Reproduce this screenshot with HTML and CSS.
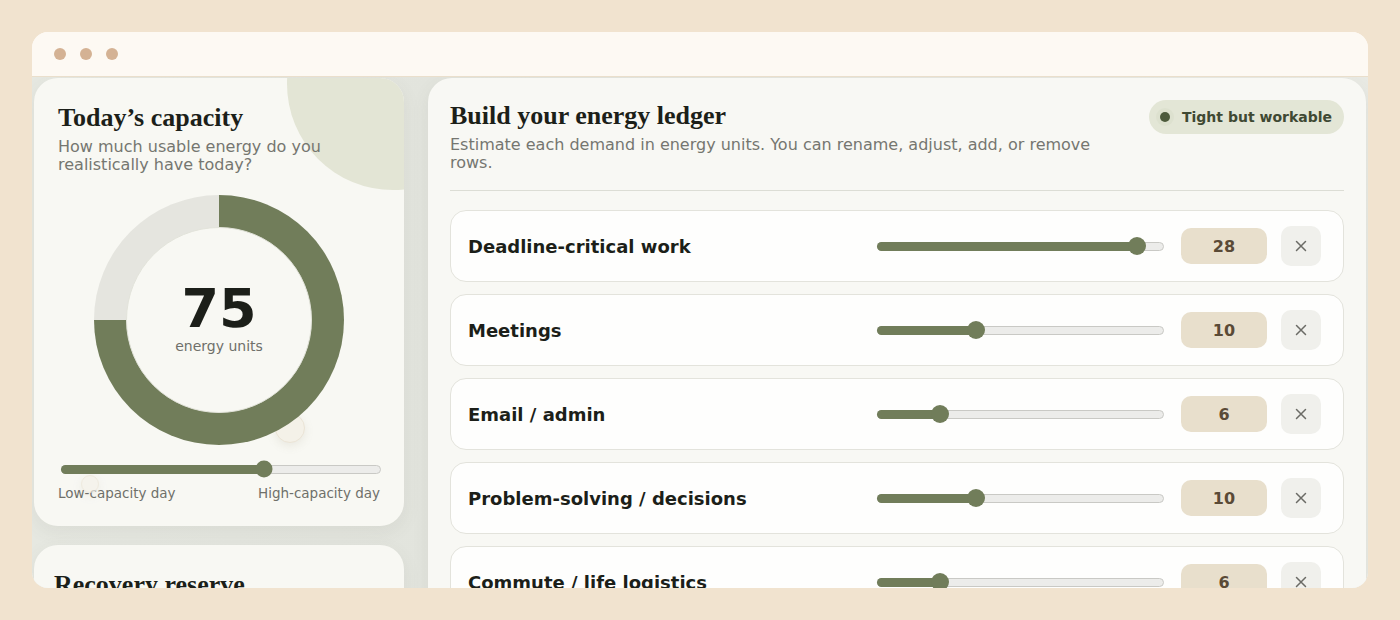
FILE: index.html
```html
<!DOCTYPE html>
<html lang="en">
<head>
<meta charset="utf-8">
<title>Energy ledger</title>
<link rel="stylesheet" href="styles.css">
</head>
<body>
<div class="window">
  <div class="titlebar">
    <span class="dot"></span><span class="dot"></span><span class="dot"></span>
  </div>
  <div class="content">
    <div class="left-col">
      <section class="card capacity">
        <div class="blob"></div>
        <span class="bubble bubble-a"></span>
        <span class="bubble bubble-b"></span>
        <h2 class="card-title">Today’s capacity</h2>
        <p class="card-sub">How much usable energy do you realistically have today?</p>
        <div class="donut" style="--pct: 75%">
          <div class="donut-inner">
            <div class="donut-num">75</div>
            <div class="donut-label">energy units</div>
          </div>
        </div>
        <div class="slider slider-cap">
          <div class="track" style="--v: 0.642"><div class="fill"></div><span class="thumb"></span></div>
        </div>
        <div class="scale-labels"><span>Low-capacity day</span><span>High-capacity day</span></div>
      </section>
      <section class="card reserve">
        <h2 class="card-title">Recovery reserve</h2>
      </section>
    </div>
    <section class="panel">
      <div class="panel-head">
        <div class="head-text">
          <h2 class="card-title">Build your energy ledger</h2>
          <p class="card-sub">Estimate each demand in energy units. You can rename, adjust, add, or remove rows.</p>
        </div>
        <div class="badge"><span class="badge-dot"></span>Tight but workable</div>
      </div>
      <div class="rows">
        <div class="row">
          <span class="row-label">Deadline-critical work</span>
          <div class="slider"><div class="track" style="--v: 0.9333"><div class="fill"></div><span class="thumb"></span></div></div>
          <span class="value">28</span>
          <button class="remove" aria-label="Remove"><svg viewBox="0 0 12 12" width="12" height="12"><path d="M1.5 1.5 L10.5 10.5 M10.5 1.5 L1.5 10.5" stroke="#6b6b66" stroke-width="1.5" stroke-linecap="round"/></svg></button>
        </div>
        <div class="row">
          <span class="row-label">Meetings</span>
          <div class="slider"><div class="track" style="--v: 0.3333"><div class="fill"></div><span class="thumb"></span></div></div>
          <span class="value">10</span>
          <button class="remove" aria-label="Remove"><svg viewBox="0 0 12 12" width="12" height="12"><path d="M1.5 1.5 L10.5 10.5 M10.5 1.5 L1.5 10.5" stroke="#6b6b66" stroke-width="1.5" stroke-linecap="round"/></svg></button>
        </div>
        <div class="row">
          <span class="row-label">Email / admin</span>
          <div class="slider"><div class="track" style="--v: 0.2"><div class="fill"></div><span class="thumb"></span></div></div>
          <span class="value">6</span>
          <button class="remove" aria-label="Remove"><svg viewBox="0 0 12 12" width="12" height="12"><path d="M1.5 1.5 L10.5 10.5 M10.5 1.5 L1.5 10.5" stroke="#6b6b66" stroke-width="1.5" stroke-linecap="round"/></svg></button>
        </div>
        <div class="row">
          <span class="row-label">Problem-solving / decisions</span>
          <div class="slider"><div class="track" style="--v: 0.3333"><div class="fill"></div><span class="thumb"></span></div></div>
          <span class="value">10</span>
          <button class="remove" aria-label="Remove"><svg viewBox="0 0 12 12" width="12" height="12"><path d="M1.5 1.5 L10.5 10.5 M10.5 1.5 L1.5 10.5" stroke="#6b6b66" stroke-width="1.5" stroke-linecap="round"/></svg></button>
        </div>
        <div class="row">
          <span class="row-label">Commute / life logistics</span>
          <div class="slider"><div class="track" style="--v: 0.2"><div class="fill"></div><span class="thumb"></span></div></div>
          <span class="value">6</span>
          <button class="remove" aria-label="Remove"><svg viewBox="0 0 12 12" width="12" height="12"><path d="M1.5 1.5 L10.5 10.5 M10.5 1.5 L1.5 10.5" stroke="#6b6b66" stroke-width="1.5" stroke-linecap="round"/></svg></button>
        </div>
      </div>
    </section>
  </div>
</div>
</body>
</html>
```

FILE: styles.css
```css
* { box-sizing: border-box; }

body {
  margin: 0;
  background: #f1e3cf;
  font-family: "DejaVu Sans", Verdana, sans-serif;
  color: #1e211b;
}

.window {
  margin: 32px;
  height: 556px;
  border-radius: 16px;
  overflow: hidden;
  background: #fdf9f3;
  display: flex;
  flex-direction: column;
}

.titlebar {
  height: 45px;
  flex: none;
  display: flex;
  align-items: center;
  gap: 14px;
  padding-left: 22px;
  background: #fdf9f3;
  border-bottom: 1px solid #eadfcc;
}

.dot {
  width: 12px;
  height: 12px;
  border-radius: 50%;
  background: #d4b294;
}

.content {
  flex: 1;
  min-height: 0;
  display: grid;
  grid-template-columns: 370px 1fr;
  gap: 24px;
  padding: 1px 2px 0 2px;
  background: linear-gradient(90deg, #e6e8e1 0%, #e2e4dd 30%, #e9eae4 100%);
  overflow: hidden;
}

.left-col {
  display: flex;
  flex-direction: column;
  gap: 19px;
}

.card {
  position: relative;
  background: #f8f8f3;
  border-radius: 24px;
  padding: 24px;
  box-shadow: 0 6px 18px rgba(90, 95, 75, 0.08);
  overflow: hidden;
  flex: none;
}

.capacity { height: 448px; }

.blob {
  position: absolute;
  left: 253px;
  top: -100px;
  width: 212px;
  height: 212px;
  border-radius: 50%;
  background: #e3e5d5;
}

.bubble {
  position: absolute;
  border-radius: 50%;
  background: #f4f1e8;
  border: 1px solid #ebe4d6;
  box-shadow: 0 3px 10px rgba(150, 140, 110, 0.14);
}
.bubble-a { left: 241px; top: 335px; width: 30px; height: 30px; }
.bubble-b { left: 47px; top: 397px; width: 18px; height: 18px; opacity: 0.7; }

.card-title {
  position: relative;
  margin: 0;
  font-family: "Liberation Serif", "Times New Roman", serif;
  font-weight: 700;
  font-size: 26px;
  line-height: 31px;
  color: #1c1f19;
}

.card-sub {
  position: relative;
  margin: 5px 0 0;
  font-size: 16px;
  line-height: 18px;
  color: #757670;
}

.donut {
  position: relative;
  margin: 21px auto 0;
  width: 250px;
  height: 250px;
  border-radius: 50%;
  background: conic-gradient(#717d5a 0 var(--pct), #e5e5df var(--pct) 100%);
  display: flex;
  align-items: center;
  justify-content: center;
}

.donut-inner {
  width: 186px;
  height: 186px;
  border-radius: 50%;
  background: #f8f8f3;
  border: 1px solid #e2e3da;
  display: flex;
  flex-direction: column;
  align-items: center;
  justify-content: center;
}

.donut-num {
  font-size: 54px;
  font-weight: 700;
  line-height: 56px;
  color: #1c1f19;
  margin-top: -6px;
}

.donut-label {
  font-size: 14px;
  color: #6f706a;
  margin-top: 1px;
}

.slider {
  position: relative;
  height: 18px;
  display: flex;
  align-items: center;
}

.track {
  --t: 18px;
  position: relative;
  width: 100%;
  height: 9px;
  border-radius: 5px;
  background: #ececea;
  border: 1px solid #c9c9c5;
}

.fill {
  position: absolute;
  left: -1px;
  top: -1px;
  bottom: -1px;
  width: calc(var(--t) / 2 + (100% - var(--t)) * var(--v));
  border-radius: 5px;
  background: #717d5a;
}

.thumb {
  position: absolute;
  top: 50%;
  left: calc(var(--t) / 2 - 1px + (100% - var(--t) + 2px) * var(--v));
  width: var(--t);
  height: var(--t);
  transform: translate(-50%, -50%);
  border-radius: 50%;
  background: #717d5a;
}

.slider-cap {
  margin: 15px -1px 0 3px;
}
.slider-cap .track { --t: 17px; }

.scale-labels {
  display: flex;
  justify-content: space-between;
  margin-top: 7px;
  font-size: 13.5px;
  color: #6f706a;
}

.reserve {
  height: 120px;
  padding: 24px 20px;
}

.panel {
  background: #f8f8f4;
  border-radius: 24px;
  padding: 22px 22px 0 22px;
  box-shadow: 0 6px 18px rgba(90, 95, 75, 0.08);
  min-width: 0;
}

.panel-head {
  display: flex;
  justify-content: space-between;
  align-items: flex-start;
  padding-bottom: 18px;
  border-bottom: 1px solid #dcddd5;
}

.head-text { max-width: 650px; }

.badge {
  display: flex;
  align-items: center;
  gap: 12px;
  height: 34px;
  padding: 0 12px 0 11px;
  border-radius: 17px;
  background: #e3e6d6;
  font-size: 14px;
  font-weight: 700;
  color: #3f4933;
  white-space: nowrap;
}

.badge-dot {
  width: 10px;
  height: 10px;
  border-radius: 50%;
  background: #4d5a3c;
  box-shadow: 0 0 0 4px #dde1cf;
}

.rows {
  margin-top: 19px;
  display: flex;
  flex-direction: column;
  gap: 12px;
}

.row {
  display: grid;
  grid-template-columns: 1fr 290px 86px 40px;
  align-items: center;
  column-gap: 14px;
  height: 72px;
  padding: 0 22px 0 17px;
  background: #fefefd;
  border: 1px solid #e3e3dc;
  border-radius: 16px;
  flex: none;
}

.row-label {
  font-size: 18px;
  font-weight: 700;
  color: #1c1f19;
}

.row .slider { margin-right: 3px; }

.value {
  height: 36px;
  border-radius: 10px;
  background: #e8dfcc;
  display: flex;
  align-items: center;
  justify-content: center;
  font-size: 16px;
  font-weight: 700;
  color: #5a4a36;
}

.remove {
  width: 40px;
  height: 40px;
  border: none;
  border-radius: 10px;
  background: #f0f0ec;
  display: flex;
  align-items: center;
  justify-content: center;
  padding: 0;
}
```
